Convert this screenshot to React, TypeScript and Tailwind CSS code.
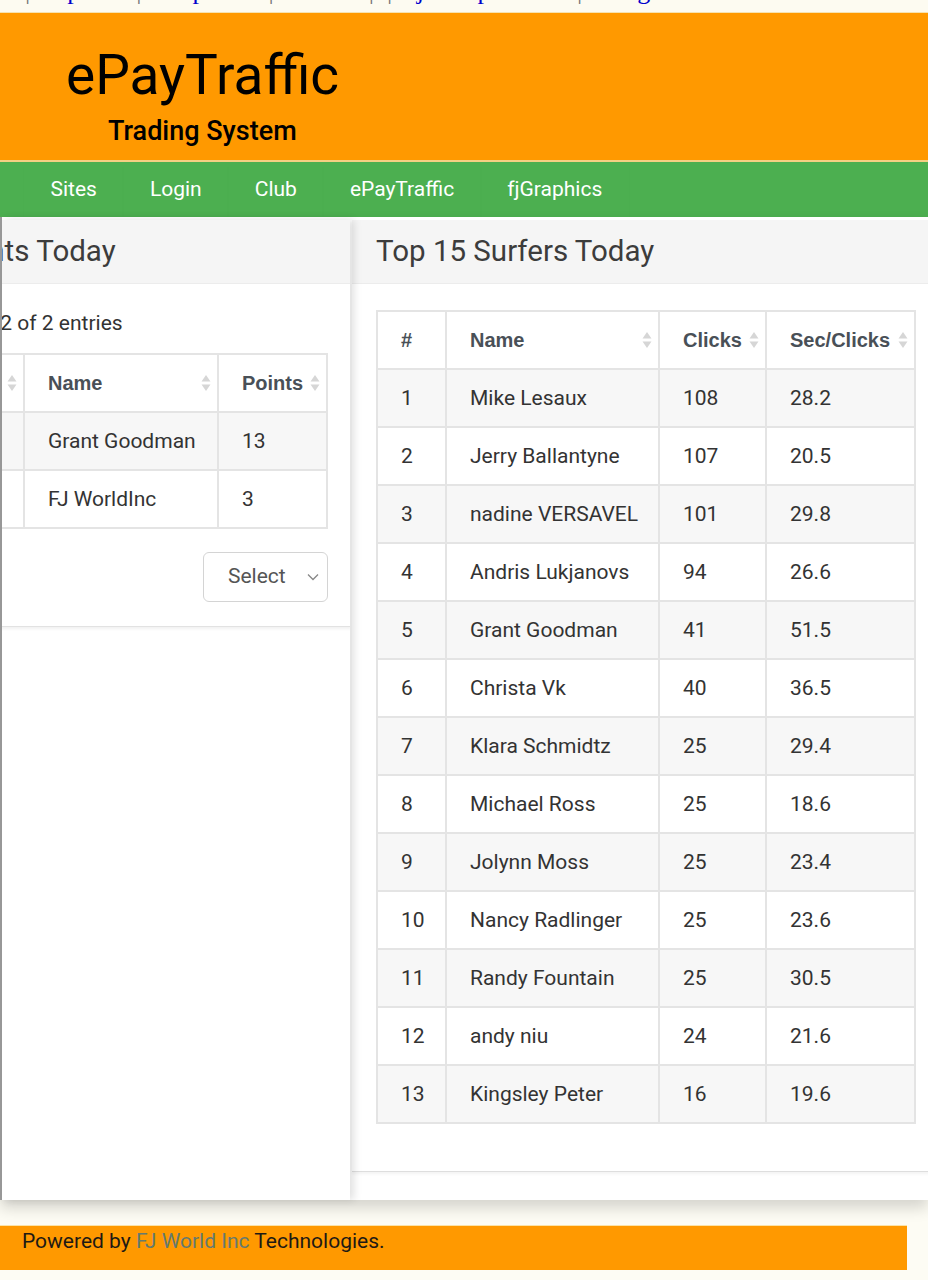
import React from "react";

const SortIcon = () => (
  <svg width="10" height="18" viewBox="0 0 10 18" className="shrink-0">
    <path d="M5 1 L9.5 7.5 H0.5 Z" fill="#d6d6d6" />
    <path d="M5 17 L9.5 10.5 H0.5 Z" fill="#d6d6d6" />
  </svg>
);

const surfers = [
  ["1", "Mike Lesaux", "108", "28.2"],
  ["2", "Jerry Ballantyne", "107", "20.5"],
  ["3", "nadine VERSAVEL", "101", "29.8"],
  ["4", "Andris Lukjanovs", "94", "26.6"],
  ["5", "Grant Goodman", "41", "51.5"],
  ["6", "Christa Vk", "40", "36.5"],
  ["7", "Klara Schmidtz", "25", "29.4"],
  ["8", "Michael Ross", "25", "18.6"],
  ["9", "Jolynn Moss", "25", "23.4"],
  ["10", "Nancy Radlinger", "25", "23.6"],
  ["11", "Randy Fountain", "25", "30.5"],
  ["12", "andy niu", "24", "21.6"],
  ["13", "Kingsley Peter", "16", "19.6"],
];

const points = [
  ["1", "Grant Goodman", "13"],
  ["2", "FJ WorldInc", "3"],
];

const navItems = ["Sites", "Login", "Club", "ePayTraffic", "fjGraphics"];

const th =
  "border-2 border-[#e4e4e4] pl-[23px] pr-[6px] py-[13px] text-left text-[20px] font-bold text-[#495057] font-['Liberation_Sans',Arial,sans-serif]";
const td = "border-2 border-[#e4e4e4] px-[23px] py-[13px] text-[#333]";

const HeadCell = ({ label, sort = true }: { label: string; sort?: boolean }) => (
  <th className={th}>
    <div className="flex items-center justify-between leading-[30px]">
      <span>{label}</span>
      {sort && <SortIcon />}
    </div>
  </th>
);

export default function App() {
  return (
    <div className="w-[928px] h-[1280px] overflow-hidden bg-[#fdfcf4] font-['Roboto',sans-serif] text-[21px]">
      {/* top link strip, cut off */}
      <div className="h-[13px] overflow-hidden bg-[#fdfbf1] border-b border-[#f7e3b0]">
        <div className="flex items-start -mt-[22px] text-[26px] leading-none font-['Liberation_Serif',serif] text-[#0000cc] whitespace-nowrap">
          <span className="w-[25px] shrink-0" />
          <span className="text-[#777]">|</span>
          <span className="w-[106px] shrink-0 pl-[10px]">Top</span>
          <span className="text-[#777]">|</span>
          <span className="w-[127px] shrink-0 pl-[24px]">Top</span>
          <span className="text-[#777]">|</span>
          <span className="w-[95px] shrink-0 pl-[14px]">Home</span>
          <span className="text-[#777]">|</span>
          <span className="w-[13px] shrink-0" />
          <span className="text-[#777]">|</span>
          <span className="w-[185px] shrink-0 pl-[16px]">fjGroups</span>
          <span className="text-[#777]">|</span>
          <span className="pl-[26px]">Login</span>
        </div>
      </div>

      {/* header */}
      <header className="h-[149px] bg-[#ff9900] border-b-2 border-[#f5cf83] pt-[29px]">
        <h1 className="pl-[66px] text-[55px] leading-[1.2] font-normal text-black">ePayTraffic</h1>
        <div className="pl-[108px] mt-[7px] text-[27px] leading-[1.2] font-medium text-black">Trading System</div>
      </header>

      {/* nav */}
      <nav className="h-[55px] bg-[#4caf50] flex pl-[24px]">
        {navItems.map((item) => (
          <a
            key={item}
            href="#"
            className="h-full flex items-center px-[26.5px] text-white text-[21px] shadow-[0_3px_3px_-2px_rgba(0,0,0,0.12)]"
          >
            {item}
          </a>
        ))}
      </nav>

      {/* main */}
      <main className="h-[983px] bg-white flex pt-[3px] border-l-2 border-[#9a9a9a] shadow-[0_8px_14px_rgba(0,0,0,0.16)] relative">
        {/* left column */}
        <div className="w-[348px] shrink-0 overflow-hidden relative z-10 bg-white shadow-[4px_0_8px_rgba(0,0,0,0.12)]">
          <div className="ml-[-147px] w-[497px] bg-white border-b border-[#e2e2e2] shadow-[0_2px_3px_rgba(0,0,0,0.06)]">
            <div className="h-[64px] bg-[#f5f5f5] border-b border-[#ececec] flex items-center pl-[34px]">
              <h2 className="text-[29.5px] font-normal text-[#3c3c3c] whitespace-nowrap">Top Points Today</h2>
            </div>
            <div className="p-[24px]">
              <div className="-ml-[5px] leading-[30px] text-[#333] whitespace-nowrap">Showing 1 to 2 of 2 entries</div>
              <table className="mt-[15px] w-[447px] table-fixed border-collapse">
                <colgroup>
                  <col className="w-[144px]" />
                  <col className="w-[194px]" />
                  <col className="w-[109px]" />
                </colgroup>
                <thead>
                  <tr>
                    <HeadCell label="Rank" />
                    <HeadCell label="Name" />
                    <HeadCell label="Points" />
                  </tr>
                </thead>
                <tbody className="leading-[30px]">
                  {points.map((r, i) => (
                    <tr key={r[0]} className={i % 2 === 0 ? "bg-[#f7f7f7]" : "bg-white"}>
                      <td className={td}>{r[0]}</td>
                      <td className={`${td} whitespace-nowrap`}>{r[1]}</td>
                      <td className={td}>{r[2]}</td>
                    </tr>
                  ))}
                </tbody>
              </table>
              <div className="flex justify-end mt-[23px]">
                <div className="w-[125px] h-[50px] border border-[#d4d4d4] rounded-[6px] flex items-center justify-between pl-[24px] pr-[8px] text-[#555]">
                  <span>Select</span>
                  <svg width="12" height="8" viewBox="0 0 12 8">
                    <path d="M1 1.5 L6 6.5 L11 1.5" fill="none" stroke="#888" strokeWidth="1.3" />
                  </svg>
                </div>
              </div>
            </div>
          </div>
        </div>

        {/* right column */}
        <div className="ml-[2px] w-[586px] shrink-0">
          <div className="bg-white border-b border-[#dedede] shadow-[0_2px_3px_rgba(0,0,0,0.05)]">
            <div className="h-[64px] bg-[#f5f5f5] border-b border-[#ececec] flex items-center pl-[24px]">
              <h2 className="text-[29.5px] font-normal text-[#3c3c3c] whitespace-nowrap">Top 15 Surfers Today</h2>
            </div>
            <div className="px-[24px] pt-[26px] pb-[47px]">
              <table className="w-[538px] table-fixed border-collapse">
                <colgroup>
                  <col className="w-[69px]" />
                  <col className="w-[213px]" />
                  <col className="w-[107px]" />
                  <col className="w-[149px]" />
                </colgroup>
                <thead>
                  <tr>
                    <HeadCell label="#" sort={false} />
                    <HeadCell label="Name" />
                    <HeadCell label="Clicks" />
                    <HeadCell label="Sec/Clicks" />
                  </tr>
                </thead>
                <tbody className="leading-[30px]">
                  {surfers.map((r, i) => (
                    <tr key={r[0]} className={i % 2 === 0 ? "bg-[#f7f7f7]" : "bg-white"}>
                      <td className={td}>{r[0]}</td>
                      <td className={`${td} whitespace-nowrap`}>{r[1]}</td>
                      <td className={td}>{r[2]}</td>
                      <td className={td}>{r[3]}</td>
                    </tr>
                  ))}
                </tbody>
              </table>
            </div>
          </div>
        </div>
      </main>

      {/* footer */}
      <footer className="mt-[25px] w-[907px] h-[45px] bg-[#ff9900] border-t border-[#fbe3a8] flex items-start pl-[22px] text-[21px] leading-[30px] text-[#1e1a14]">
        <span>
          Powered by <a href="#" className="text-[#657a70]">FJ World Inc</a> Technologies.
        </span>
      </footer>
    </div>
  );
}
